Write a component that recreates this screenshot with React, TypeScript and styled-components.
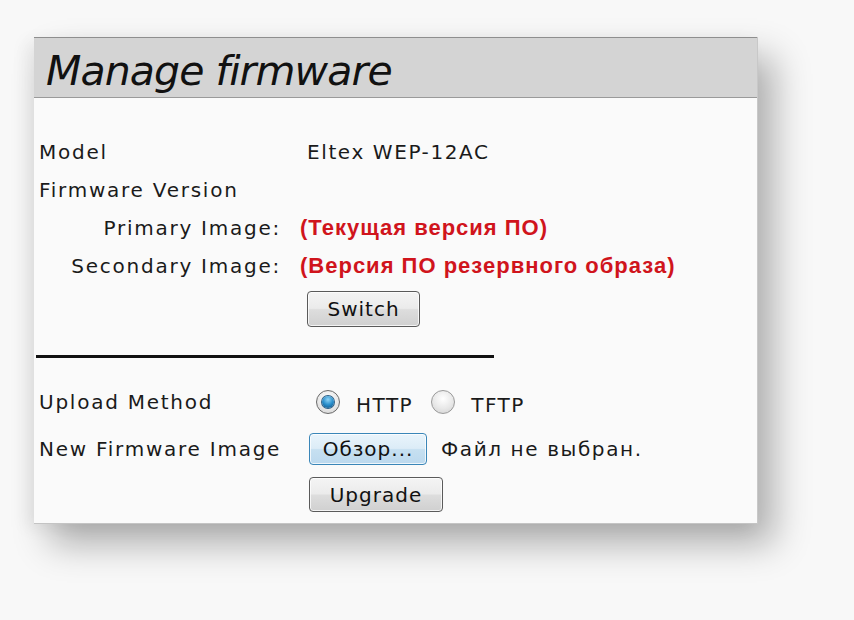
import React from "react";
import styled, { createGlobalStyle } from "styled-components";

const Global = createGlobalStyle`
  html, body { margin: 0; padding: 0; background: #f8f8f8; }
  #root { width: 854px; height: 620px; overflow: hidden; }
`;

const Page = styled.div`
  width: 854px;
  height: 620px;
  box-sizing: border-box;
  padding: 37px 0 0 34px;
  background: #f8f8f8;
`;

const Panel = styled.div`
  width: 724px;
  height: 487px;
  box-sizing: border-box;
  background: #fafafa;
  border-right: 1px solid #c8c8c8;
  border-bottom: 1px solid #c4c4c4;
  box-shadow: 16px 20px 34px rgba(0, 0, 0, 0.3), -8px 4px 16px rgba(0, 0, 0, 0.06);
  display: flex;
  flex-direction: column;
`;

const Header = styled.div`
  height: 61px;
  box-sizing: border-box;
  background: #d4d4d4;
  border-top: 1px solid #8e8e8e;
  border-bottom: 1px solid #9a9a9a;
  display: flex;
  align-items: center;
  padding-left: 12px;
`;

const Title = styled.h1`
  margin: 0;
  font-family: "DejaVu Sans", Verdana, sans-serif;
  font-style: italic;
  font-weight: normal;
  font-size: 41px;
  letter-spacing: -0.9px;
  color: #111;
  transform: translateY(3px);
`;

const Body = styled.div`
  padding: 35px 0 0 5px;
  display: flex;
  flex-direction: column;
`;

const Grid = styled.div`
  display: grid;
  grid-template-columns: 268px 1fr;
  grid-template-rows: repeat(4, 38px) 42px;
  align-items: center;
`;

const Label = styled.div<{ $indent?: boolean }>`
  font-family: "DejaVu Sans", Verdana, sans-serif;
  font-size: 20px;
  letter-spacing: 1.75px;
  color: #1a1a1a;
  white-space: nowrap;
  text-align: ${(p) => (p.$indent ? "right" : "left")};
  padding-right: ${(p) => (p.$indent ? "26px" : "0")};
`;

const Value = styled.div`
  font-family: "DejaVu Sans", Verdana, sans-serif;
  font-size: 20px;
  letter-spacing: 1.6px;
  color: #1a1a1a;
  white-space: nowrap;
`;

const RedNote = styled.div`
  font-family: "Liberation Sans", Arial, sans-serif;
  font-weight: bold;
  font-size: 22px;
  letter-spacing: 1px;
  color: #d0141c;
  white-space: nowrap;
  margin-left: -7px;
`;

const ButtonCell = styled.div`
  grid-column: 2;
  align-self: start;
  padding-top: 6px;
`;

const Button = styled.button<{ $w: number; $h: number; $focus?: boolean }>`
  width: ${(p) => p.$w}px;
  height: ${(p) => p.$h}px;
  box-sizing: border-box;
  border-radius: 4px;
  border: 1px solid ${(p) => (p.$focus ? "#3a86b8" : "#5a5a5a")};
  background: ${(p) =>
    p.$focus
      ? "linear-gradient(#e9f4fb 0%, #dcecf7 48%, #c6e0f1 52%, #bcd9ee 100%)"
      : "linear-gradient(#f4f4f4 0%, #ebebeb 48%, #dddddd 52%, #d0d0d0 100%)"};
  box-shadow: inset 0 0 0 1px rgba(255, 255, 255, 0.75);
  font-family: "DejaVu Sans", Verdana, sans-serif;
  font-size: 20px;
  color: #111;
  padding: 0;
  display: flex;
  align-items: center;
  justify-content: center;
  letter-spacing: 1px;
`;

const Separator = styled.div`
  width: 458px;
  height: 3px;
  background: #111;
  margin: 28px 0 0 -3px;
`;

const Lower = styled.div`
  display: grid;
  grid-template-columns: 270px 1fr;
  grid-template-rows: 46px 48px 43px;
  align-items: center;
  margin-top: 21px;
`;

const RadioGroup = styled.div`
  display: flex;
  align-items: center;
  padding-left: 7px;
`;

const Radio = styled.span<{ $checked?: boolean }>`
  width: 24px;
  height: 24px;
  box-sizing: border-box;
  border-radius: 50%;
  border: 1px solid ${(p) => (p.$checked ? "#6a6a6a" : "#9a9a9a")};
  background: radial-gradient(circle at 50% 35%, #ffffff 0%, #e8e8e8 55%, #cfcfcf 100%);
  display: flex;
  align-items: center;
  justify-content: center;
  &::after {
    content: "";
    width: 12px;
    height: 12px;
    border-radius: 50%;
    display: ${(p) => (p.$checked ? "block" : "none")};
    background: radial-gradient(circle at 50% 30%, #8fd3f5 0%, #2a8fcc 50%, #0b4d80 100%);
    box-shadow: 0 0 0 1px #2d5f86;
  }
`;

const RadioText = styled.span`
  font-family: "DejaVu Sans", Verdana, sans-serif;
  font-size: 20px;
  letter-spacing: 1.5px;
  color: #1a1a1a;
  margin: 0 18px 0 16px;
  transform: translateY(3px);
`;

const FileRow = styled.div`
  display: flex;
  align-items: center;
  gap: 14px;
`;

export default function App() {
  return (
    <>
      <Global />
      <Page>
        <Panel>
          <Header>
            <Title>Manage firmware</Title>
          </Header>
          <Body>
            <Grid>
              <Label>Model</Label>
              <Value>Eltex WEP-12AC</Value>
              <Label>Firmware Version</Label>
              <Value />
              <Label $indent>Primary Image:</Label>
              <RedNote>(Текущая версия ПО)</RedNote>
              <Label $indent>Secondary Image:</Label>
              <RedNote>(Версия ПО резервного образа)</RedNote>
              <ButtonCell>
                <Button $w={113} $h={36}>Switch</Button>
              </ButtonCell>
            </Grid>
            <Separator />
            <Lower>
              <Label>Upload Method</Label>
              <RadioGroup>
                <Radio $checked />
                <RadioText>HTTP</RadioText>
                <Radio />
                <RadioText>TFTP</RadioText>
              </RadioGroup>
              <Label>New Firmware Image</Label>
              <FileRow>
                <Button $w={118} $h={32} $focus>Обзор...</Button>
                <Value>Файл не выбран.</Value>
              </FileRow>
              <div />
              <div>
                <Button $w={134} $h={35}>Upgrade</Button>
              </div>
            </Lower>
          </Body>
        </Panel>
      </Page>
    </>
  );
}
